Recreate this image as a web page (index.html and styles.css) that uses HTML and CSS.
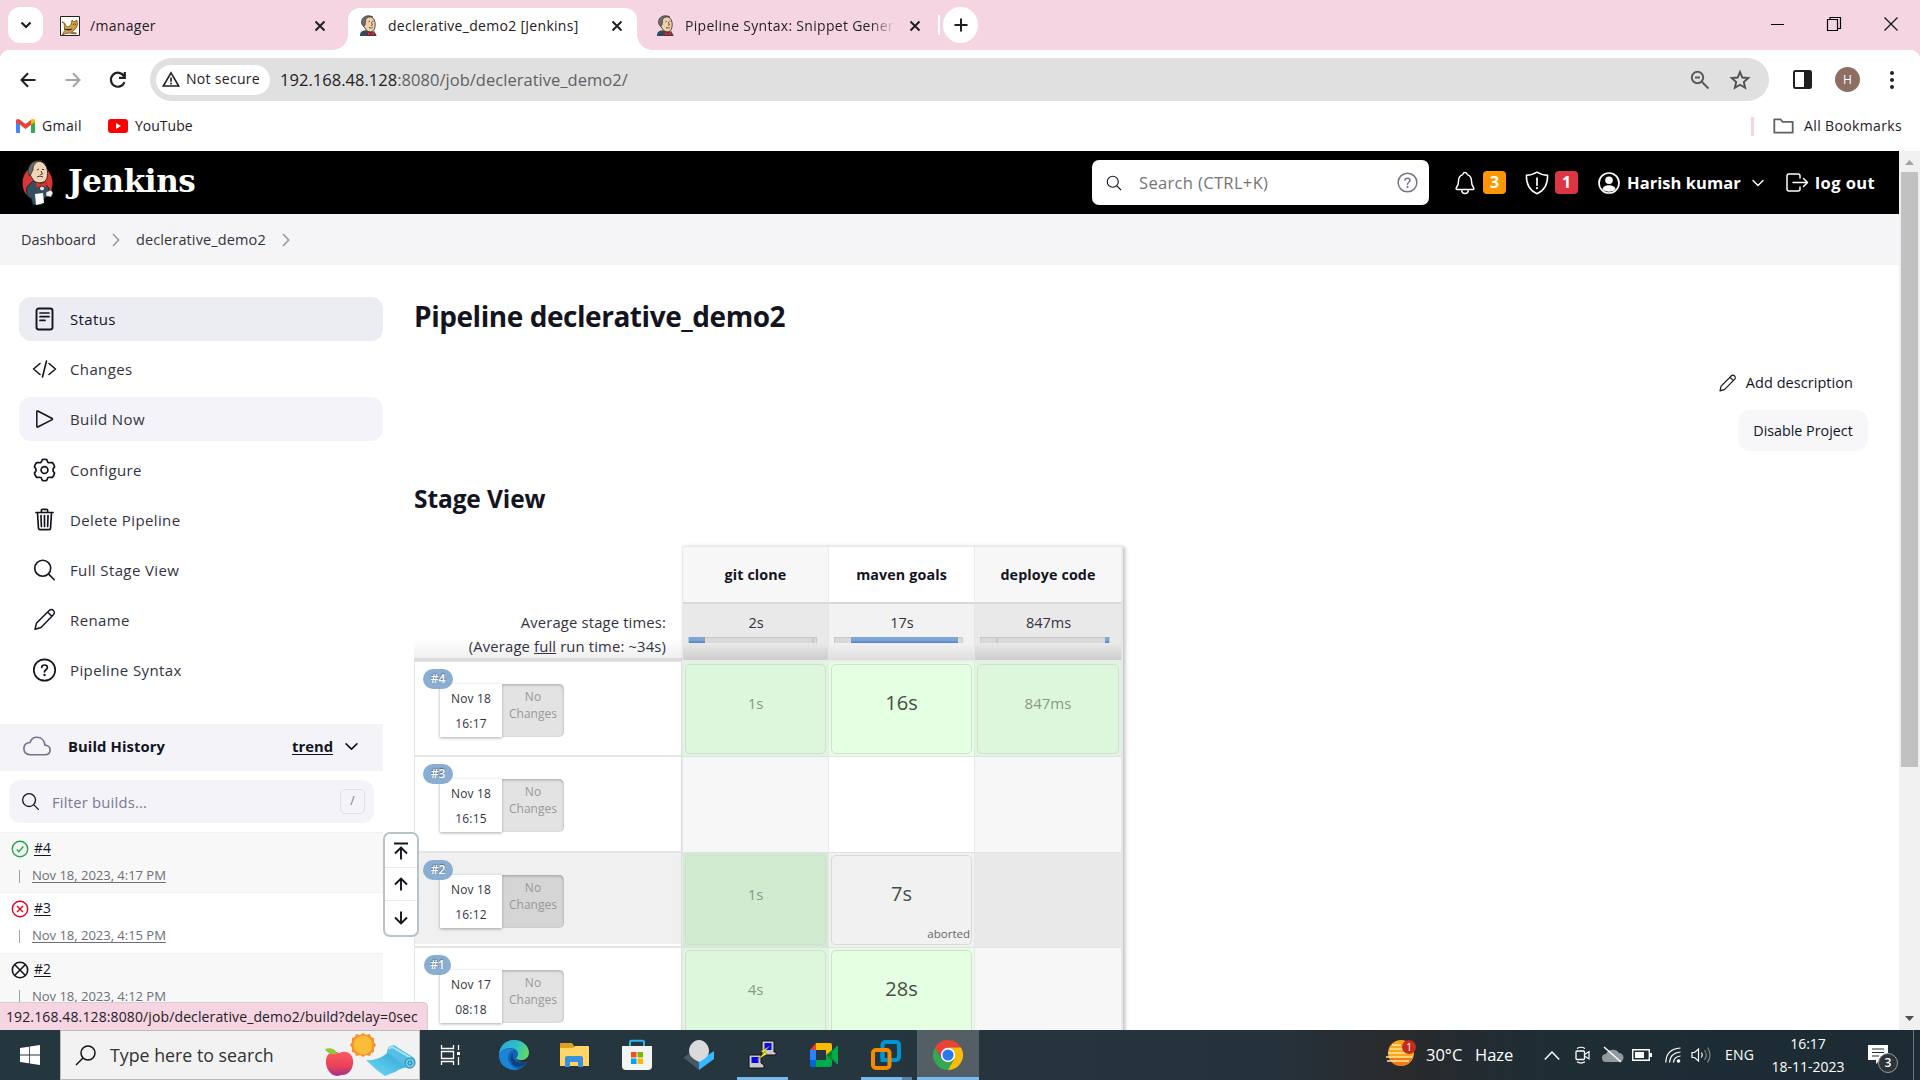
FILE: index.html
```html
<!DOCTYPE html>
<html lang="en">
<head>
<meta charset="utf-8">
<title>declerative_demo2 [Jenkins]</title>
<link rel="stylesheet" href="styles.css">
</head>
<body>
<svg class="defs" aria-hidden="true">
  <symbol id="close" viewBox="0 0 12 12"><path d="M1.500 1.500l9 9m0-9l-9 9" fill="none" stroke="#1f2023" stroke-width="2"/></symbol>
  <symbol id="butler" viewBox="0 0 20 22">
    <path d="M1 22c0-4 2-5.500 6-6l5 1c4 0 6 2 6.500 5z" fill="#2f4a5c"/>
    <path d="M5 5c1-4 9-5 11 0 1.500 3 1.500 8-.5 11-2 2.500-6 2-7.500 0L5 12z" fill="#efd0a8" stroke="#3b3634" stroke-width=".9"/>
    <path d="M5 12C1.500 10 2 4 5.500 2 8 .2 12 .3 14.500 2 11 1.500 8 2 7 5l-.5 5z" fill="#6d6b6d" stroke="#333" stroke-width=".7"/>
    <path d="M10 7l1.500-.6M13.800 6.500h1.400M13 7.500l1.200 3-1.600.4M10.500 13c1.500 1 3 .8 4-.2" fill="none" stroke="#51453b" stroke-width=".9"/>
    <path d="M9 17.500l3.500 1.500 3.700-1.800v4.300l-3.700-1.300L9 22z" fill="#d33833" stroke="#6e1512" stroke-width=".5"/>
  </symbol>
  <symbol id="search" viewBox="0 0 512 512"><path d="M221.090 64a157.090 157.090 0 10157.090 157.090A157.100 157.100 0 00221.090 64zM338.290 338.290L448 448" fill="none" stroke="currentColor" stroke-width="32" stroke-linecap="round"/></symbol>
  <symbol id="help" viewBox="0 0 24 24"><circle cx="12" cy="12" r="10.700" fill="none" stroke="currentColor" stroke-width="1.700"/><path d="M9.200 9.400c.1-3.200 5.700-3.200 5.700.1 0 2.200-2.800 2.200-2.900 4.400" fill="none" stroke="currentColor" stroke-width="1.700" stroke-linecap="round"/><circle cx="12" cy="17" r="1.200" fill="currentColor"/></symbol>
  <symbol id="chevron" viewBox="0 0 14 8"><path d="M1.200 1.200L7 6.800l5.800-5.600" fill="none" stroke="currentColor" stroke-width="1.700" stroke-linecap="round" stroke-linejoin="round"/></symbol>
  <symbol id="crumb" viewBox="0 0 8 14"><path d="M1.500 1.500L6.700 7l-5.200 5.500" fill="none" stroke="#9999ad" stroke-width="1.700" stroke-linecap="round" stroke-linejoin="round"/></symbol>
  <symbol id="pencil" viewBox="0 0 24 24"><path d="M2.200 21.800l1.400-6L16.400 3a2.900 2.900 0 014.200 4.200L8.200 20zM15 4.700l4.300 4.300" transform="translate(.3 -.5)" fill="none" stroke="currentColor" stroke-width="1.500" stroke-linejoin="round"/></symbol>
</svg>

<header class="tabs">
  <button class="tab-menu"><svg width="12" height="8" viewBox="0 0 12 8"><path d="M1.500 1.500L6 6l4.500-4.500" fill="none" stroke="#1f2023" stroke-width="2.200"/></svg></button>
  <div class="tab tab-first">
    <svg width="20" height="20" viewBox="0 0 20 20"><path d="M.5.5h19v19H.5z" fill="#fdfdf6" stroke="#222"/><path d="M2 6c4 0 3 5 6 5l3-2 1-5 2 2 3-2 .5 5-2 4-4 3 5 1-1 1-6-1-4 .5-3 1.500 1-3 2-2C3 12 6 7 2 6z" fill="#d2a041" stroke="#5c4012" stroke-width=".7"/><path d="M13 8l1 .5m2-.5l-1 .5M4 13l5 1 3-1" stroke="#222" stroke-width=".9"/></svg>
    <span class="tab-title">/manager</span>
    <svg class="x" width="12" height="12"><use href="#close"/></svg>
  </div>
  <div class="tab active">
    <svg width="19" height="21"><use href="#butler"/></svg>
    <span class="tab-title">declerative_demo2 [Jenkins]</span>
    <svg class="x" width="12" height="12"><use href="#close"/></svg>
  </div>
  <div class="tab">
    <svg width="19" height="21"><use href="#butler"/></svg>
    <span class="tab-title fade">Pipeline Syntax: Snippet Genera</span>
    <svg class="x" width="12" height="12"><use href="#close"/></svg>
  </div>
  <i class="tab-sep"></i>
  <button class="new-tab"><svg width="14" height="14" viewBox="0 0 14 14"><path d="M7 .5v13M.5 7h13" stroke="#1f2023" stroke-width="2"/></svg></button>
  <div class="window">
    <svg width="14" height="14" viewBox="0 0 14 14"><path d="M0 7.500h13" stroke="#000"/></svg>
    <svg width="14" height="14" viewBox="0 0 14 14"><path d="M.5 2.500h10v11H.5zM3 2.500v-2h10.500v11h-3" fill="none" stroke="#000" stroke-width="1.200"/></svg>
    <svg width="14" height="14" viewBox="0 0 14 14"><path d="M.5.5l13 13m0-13l-13 13" stroke="#111" stroke-width="1.200"/></svg>
  </div>
</header>

<div class="toolbar">
  <svg width="16" height="16" viewBox="0 0 16 16"><path d="M15.500 8H1.500M8 1.200L1.500 8 8 14.800" fill="none" stroke="#1f2023" stroke-width="2"/></svg>
  <svg width="16" height="16" viewBox="0 0 16 16"><path d="M.5 8h14M8 1.200L14.500 8 8 14.800" fill="none" stroke="#a5a5a6" stroke-width="2"/></svg>
  <svg width="18" height="18" viewBox="0 0 18 18"><path d="M15.500 11.200A7 7 0 1 1 15 5.200M15.800 1v5.800H10" fill="none" stroke="#1f2023" stroke-width="2.200"/></svg>
  <div class="omnibox">
    <div class="chip"><svg width="18" height="16" viewBox="0 0 18 16"><path d="M9 1.800L16.700 15H1.300zM9 6.500v4.200M9 11.800v1.600" fill="none" stroke="#1f2023" stroke-width="1.600"/></svg><span>Not secure</span></div>
    <div class="url"><b>192.168.48.128</b>:8080/job/declerative_demo2/</div>
    <svg width="20" height="20" viewBox="0 0 20 20"><circle cx="7.500" cy="7.500" r="5.700" fill="none" stroke="#5b5c5e" stroke-width="2"/><path d="M11.500 11.500l7 7M5 7.500h5" stroke="#5b5c5e" stroke-width="2"/></svg>
    <svg class="star" width="20" height="20" viewBox="0 0 20 20"><path d="M10 2l2.300 5.500 6 .5-4.500 4 1.400 5.900L10 14.800l-5.200 3.100L6.200 12 1.700 8l6-.5z" fill="none" stroke="#505154" stroke-width="1.900"/></svg>
  </div>
  <svg class="panel" width="19" height="19" viewBox="0 0 19 19"><rect x="1" y="1" width="17" height="17" rx="1.500" fill="#fff" stroke="#1f2023" stroke-width="2"/><path d="M11 1h7v17h-7z" fill="#1f2023"/></svg>
  <span class="avatar">H</span>
  <svg class="dots" width="4" height="18" viewBox="0 0 4 18"><path d="M2 2h0M2 9h0M2 16h0" stroke="#1f2023" stroke-width="4" stroke-linecap="round"/></svg>
</div>

<nav class="bookmarks">
  <svg width="19" height="14" viewBox="0 0 19 14"><path d="M0 2v11q0 1 1 1h3V5z" fill="#4285f4"/><path d="M19 2v11q0 1-1 1h-3V5z" fill="#34a853"/><path d="M0 2.200C0 0 2-.6 3.500.5l6 4.500 6-4.500v5L9.500 10 4 5.800 0 3.500z" fill="#ea4335"/><path d="M19 2.200C19 0 17-.6 15 .8v5l4-2.800z" fill="#fbbc04"/></svg>
  <span class="gmail">Gmail</span>
  <svg width="20" height="14" viewBox="0 0 20 14"><rect width="20" height="14" rx="3" fill="#f00"/><path d="M8 4l5 3-5 3z" fill="#fff"/></svg>
  <span class="yt">YouTube</span>
  <i class="bm-sep"></i>
  <svg width="21" height="16" viewBox="0 0 21 16"><path d="M1.300 1.300h6.200l2 2.500h10.200v10.900H1.300z" fill="none" stroke="#606164" stroke-width="1.800" stroke-linejoin="round"/></svg>
  <span class="all">All Bookmarks</span>
</nav>

<div class="viewport">
<div class="page">
  <header class="jenkins-head">
    <svg class="mascot" width="31" height="45" viewBox="0 0 31 45"><ellipse cx="15.500" cy="23" rx="15" ry="17.500" fill="#d33833"/><path d="M5 27l6-6 11 2 5 5-1 8-4 2-2 7h-9l-2-7C5 38 4 32 5 27z" fill="#335061" stroke="#101b22" stroke-width=".8"/><path d="M8 6c3-6 12-7 16 0 2 4 2 11 0 14-3 4-10 3-12 1L8 15z" fill="#f0d6b7" stroke="#2a2522" stroke-width=".9"/><path d="M8 16c-3-3-2-10 2-13C14 0 18 0 20 1c-6 0-9 3-9 9z" fill="#6d6b6d" stroke="#222" stroke-width=".7"/><path d="M15 10l2-1m3 .5h2M19 11l1.500 3-2 .5M15 17q3-2 6 0" fill="none" stroke="#49372c"/><path d="M14 22l5 2 5-2v6l-5-2-5 2z" fill="#d33833" stroke="#81211d" stroke-width=".5"/><circle cx="20" cy="28.500" r="2.500" fill="#e5e2e2" stroke="#333"/><path d="M13 34l8-1 1 10-8 2z" fill="#fff"/><path d="M24 32l5-2 2 3-2 4-5-1z" fill="#eee" stroke="#444" stroke-width=".6"/></svg>
    <span class="brand">Jenkins</span>
    <div class="search-box"><svg width="18" height="18" class="ink"><use href="#search"/></svg><span>Search (CTRL+K)</span><svg width="21" height="21" class="violet"><use href="#help"/></svg></div>
    <svg class="bell" width="26" height="26" viewBox="0 0 512 512"><path d="M427.680 351.430C402 320 383.870 304 383.870 217.350 383.870 138 343.350 109.730 310 96c-4.430-1.820-8.600-6-9.950-10.550C294.200 65.540 277.800 48 256 48s-38.210 17.550-44 37.470c-1.350 4.600-5.520 8.710-9.950 10.530-33.390 13.750-73.870 41.920-73.870 121.350C128.130 304 110 320 84.320 351.430 73.680 364.450 83 384 101.610 384h308.880c18.510 0 27.770-19.610 17.190-32.570zM320 384v16a64 64 0 01-128 0v-16" fill="none" stroke="#fff" stroke-width="29"/></svg>
    <span class="count orange">3</span>
    <svg class="shield" width="24" height="24" viewBox="0 0 24 24"><path d="M12 1.200c3 2 6.500 3 10.600 3.100C22.800 14 19 19.800 12 22.800 5 19.800 1.200 14 1.400 4.300 5.500 4.200 9 3.200 12 1.200z" fill="none" stroke="#fff" stroke-width="1.500" stroke-linejoin="round"/><path d="M12 7.200v7" stroke="#fff" stroke-width="1.700" stroke-linecap="round"/><circle cx="12" cy="17.200" r="1.100" fill="#fff"/></svg>
    <span class="count red">1</span>
    <svg class="user" width="22" height="22" viewBox="0 0 22 22"><circle cx="11" cy="11" r="10" fill="none" stroke="#fff" stroke-width="1.700"/><circle cx="11" cy="8.300" r="3.800" fill="#fff"/><path d="M4.500 17c1-5 12-5 13 0-3 3.500-10 3.500-13 0z" fill="#fff"/></svg>
    <span class="username">Harish kumar</span>
    <svg class="user-chev" width="12" height="8"><use href="#chevron"/></svg>
    <svg class="exit" width="23" height="19" viewBox="0 0 23 19"><path d="M14 5V3q0-2-2-2H3Q1 1 1 3v13q0 2 2 2h9q2 0 2-2v-2M7 9.500h14.500M17.500 5.500l4 4-4 4" fill="none" stroke="#fff" stroke-width="1.500" stroke-linecap="round" stroke-linejoin="round"/></svg>
    <span class="logout">log out</span>
  </header>
  <nav class="crumbs"><span class="c1">Dashboard</span><svg width="8" height="14"><use href="#crumb"/></svg><span class="c2">declerative_demo2</span><svg width="8" height="14"><use href="#crumb"/></svg></nav>

  <div class="body">
    <aside class="side">
      <ul class="tasks">
        <li class="current"><svg width="24" height="24" viewBox="0 0 24 24"><rect x="4" y="1.500" width="16" height="21" rx="2.200" fill="none" stroke="currentColor" stroke-width="1.900"/><path d="M7.500 6h9M7.500 9.700h9M7.500 13.400h5" stroke="currentColor" stroke-width="1.700" stroke-linecap="round"/></svg><span>Status</span></li>
        <li><svg width="24" height="24" viewBox="0 0 24 24"><path d="M7.500 6.500L1 12l6.500 5.500M16.500 6.500L23 12l-6.500 5.500M14 4l-4 16" fill="none" stroke="currentColor" stroke-width="1.600" stroke-linecap="round" stroke-linejoin="round"/></svg><span>Changes</span></li>
        <li class="hover"><svg width="24" height="24" viewBox="0 0 512 512"><path d="M92 96v320c0 10 10 16 20 10l308-158c9-5 9-18 0-23L112 86c-10-6-20 0-20 10z" fill="none" stroke="currentColor" stroke-width="32"/></svg><span>Build Now</span></li>
        <li><svg width="24" height="24" viewBox="0 0 24 24"><path d="M9.800 1.630Q12 .9 14.200 1.630L15.300 4.300Q16.300 4.900 17.200 4.700L19.880 4.600Q21.500 6.500 22.080 8.720L20.600 11Q20.400 12 20.600 13L22.080 15.280Q21.500 17.500 19.880 19.400L17.200 19.300Q16.300 19.100 15.300 19.700L14.200 22.370Q12 23.100 9.800 22.370L8.700 19.700Q7.700 19.100 6.800 19.300L4.120 19.400Q2.500 17.500 1.920 15.280L3.400 13Q3.600 12 3.400 11L1.920 8.720Q2.500 6.500 4.120 4.600L6.800 4.700Q7.700 4.900 8.700 4.300z" fill="none" stroke="currentColor" stroke-width="1.700" stroke-linejoin="round"/><circle cx="12" cy="12" r="3.400" fill="none" stroke="currentColor" stroke-width="1.700"/></svg><span>Configure</span></li>
        <li><svg width="25" height="25" viewBox="0 0 512 512"><path d="M112 112l20 320c.95 18.490 14.400 32 32 32h184c17.670 0 30.870-13.510 32-32l20-320M80 112h352M192 112V72h0a23.930 23.930 0 0124-24h80a23.930 23.930 0 0124 24h0v40M256 176v224M184 176l8 224M328 176l-8 224" fill="none" stroke="currentColor" stroke-width="34" stroke-linecap="round" stroke-linejoin="round"/></svg><span>Delete Pipeline</span></li>
        <li><svg width="26" height="26"><use href="#search"/></svg><span>Full Stage View</span></li>
        <li><svg width="24" height="24"><use href="#pencil"/></svg><span>Rename</span></li>
        <li><svg width="24" height="24"><use href="#help"/></svg><span>Pipeline Syntax</span></li>
      </ul>
      <div class="history-head"><svg width="28" height="28" viewBox="0 0 512 512"><path d="M400 240c-8.890-89.540-71-144-144-144-69 0-113.440 48.200-128 96-60 6-112 43.590-112 112 0 66 54 112 120 112h260c55 0 100-27.440 100-88 0-59.820-53-85.760-96-88z" fill="none" stroke="#73738c" stroke-width="30" stroke-linejoin="round"/></svg><b>Build History</b><a class="trend">trend</a><svg width="13" height="9"><use href="#chevron"/></svg></div>
      <div class="filter"><svg width="21" height="21"><use href="#search"/></svg><span>Filter builds...</span><kbd>/</kbd></div>
      <ul class="builds">
        <li><div><svg width="18" height="18" viewBox="0 0 18 18"><circle cx="9" cy="9" r="7.700" fill="none" stroke="#1ea64b" stroke-width="1.400"/><path d="M5.800 9.500l2 2.300 4.500-5.300" fill="none" stroke="#1ea64b" stroke-width="1.400"/></svg><a>#4</a></div><div class="when"><i></i><a>Nov 18, 2023, 4:17 PM</a></div></li>
        <li><div><svg width="18" height="18" viewBox="0 0 18 18"><circle cx="9" cy="9" r="7.700" fill="none" stroke="#e6001f" stroke-width="1.400"/><path d="M6 6l6 6m0-6l-6 6" stroke="#e6001f" stroke-width="1.400"/></svg><a>#3</a></div><div class="when"><i></i><a>Nov 18, 2023, 4:15 PM</a></div></li>
        <li><div><svg width="18" height="18" viewBox="0 0 18 18"><circle cx="9" cy="9" r="7.700" fill="none" stroke="#14141f" stroke-width="1.600"/><path d="M3.800 3.800l10.400 10.400m0-10.400L3.800 14.200" stroke="#14141f" stroke-width="1.600"/></svg><a>#2</a></div><div class="when"><i></i><a>Nov 18, 2023, 4:12 PM</a></div></li>
      </ul>
    </aside>

    <main class="main">
      <h1>Pipeline declerative_demo2</h1>
      <div class="actions">
        <a class="add"><svg width="19" height="19"><use href="#pencil"/></svg><span>Add description</span></a>
        <button class="disable">Disable Project</button>
      </div>
      <h2>Stage View</h2>
      <div class="stage-view">
        <div class="runs">
          <div class="averages"><span>Average stage times:</span><span>(Average <u>full</u> run time: ~34s)</span></div>
          <div class="run"><span class="num">#4</span><div class="card"><div class="date"><span>Nov 18</span><span>16:17</span></div><div class="nochg">No<br>Changes</div></div></div>
          <div class="run"><span class="num">#3</span><div class="card"><div class="date"><span>Nov 18</span><span>16:15</span></div><div class="nochg">No<br>Changes</div></div></div>
          <div class="run dim"><span class="num">#2</span><div class="card"><div class="date"><span>Nov 18</span><span>16:12</span></div><div class="nochg">No<br>Changes</div></div></div>
          <div class="run"><span class="num one">#1</span><div class="card"><div class="date"><span>Nov 17</span><span>08:18</span></div><div class="nochg">No<br>Changes</div></div></div>
        </div>
        <div class="stages">
          <div class="name odd">git clone</div><div class="name">maven goals</div><div class="name odd">deploye code</div>
          <div class="avg odd"><span>2s</span><div class="bar"><i style="width:16px"></i><s style="margin-left:107px"></s></div></div>
          <div class="avg"><span>17s</span><div class="bar"><i style="margin-left:16px;width:107px"></i></div></div>
          <div class="avg odd"><span>847ms</span><div class="bar"><s style="margin-left:15px"></s><i style="margin-left:107px;width:5px"></i></div></div>
          <div class="cell odd ok"><div>1s</div></div><div class="cell ok mid"><div>16s</div></div><div class="cell odd ok"><div>847ms</div></div>
          <div class="cell odd"></div><div class="cell"></div><div class="cell odd"></div>
          <div class="cell odd ok dark"><div>1s</div></div><div class="cell mid aborted"><div>7s<small>aborted</small></div></div><div class="cell odd void"></div>
          <div class="cell odd ok"><div>4s</div></div><div class="cell ok mid"><div>28s</div></div><div class="cell odd"></div>
        </div>
      </div>
    </main>
  </div>
</div>
<div class="scrollbar"><svg width="9" height="5" viewBox="0 0 9 5"><path d="M0 5l4.500-5L9 5z" fill="#a3a3a3"/></svg><i></i><svg width="9" height="5" viewBox="0 0 9 5"><path d="M0 0l4.500 5L9 0z" fill="#505050"/></svg></div>
<div class="jump">
  <span><svg width="14" height="18" viewBox="0 0 14 18"><path d="M0 1.500h14M7 17.500V6M1 11.500l6-6 6 6" fill="none" stroke="#14141f" stroke-width="1.900"/></svg></span>
  <span><svg width="14" height="14" viewBox="0 0 14 14"><path d="M7 13.500V1.800M1 7.500l6-6 6 6" fill="none" stroke="#14141f" stroke-width="1.900"/></svg></span>
  <span><svg width="14" height="14" viewBox="0 0 14 14"><path d="M7 .5v11.700M1 6.500l6 6 6-6" fill="none" stroke="#14141f" stroke-width="1.900"/></svg></span>
</div>
<div class="status-bubble"><span>192.168.48.128:8080/job/declerative_demo2/build?delay=0sec</span></div>
</div>

<footer class="taskbar">
  <div class="start"><svg width="20" height="20" viewBox="0 0 20 20"><path d="M0 3l9-1.300v7.900H0zM9.800 1.500L20 0v9.600H9.800zM0 10.400h9v7.900L0 17zM9.800 10.400H20V20L9.800 18.500z" fill="#fff"/></svg></div>
  <div class="win-search">
    <svg width="21" height="21" viewBox="0 0 21 21"><circle cx="13" cy="8" r="7" fill="none" stroke="#111" stroke-width="1.500"/><path d="M8 13L1 20" stroke="#111" stroke-width="1.500"/></svg>
    <span>Type here to search</span>
    <svg class="doodle" width="92" height="46" viewBox="0 0 92 46">
      <defs><linearGradient id="ap" x1="0" y1="0" x2="0" y2="1"><stop offset="0" stop-color="#ff5a5e"/><stop offset=".6" stop-color="#e8415a"/><stop offset="1" stop-color="#a52f8e"/></linearGradient><linearGradient id="mat" x1="0" y1="1" x2="1" y2="0"><stop offset="0" stop-color="#6fdcf7"/><stop offset=".6" stop-color="#3fb2dc"/><stop offset="1" stop-color="#86e0f5"/></linearGradient></defs>
      <path d="M2 28c1-8 8-10 13-7 6-3 13-1 14 7 1 9-5 16-12 15C9 47 1 38 2 28z" fill="url(#ap)"/><path d="M1 17c5-2 11 0 12 5C7 23 3 21 1 17z" fill="#8cc83c"/>
      <path d="M39 1l3 2 4-1 1 3 3 1v4l2 3-2 3v4l-3 1-1 3-4-1-3 2-3-2-4 1-1-3-3-1v-4l-2-3 2-3V6l3-1 1-3 4 1z" fill="#f7912f"/><circle cx="39" cy="13" r="9.500" fill="#f9bd38"/>
      <path d="M42 28q11 1 20-6l8-9 21 15-3 7q-10 0-17 5l-10 4q-8-5-19-16z" fill="url(#mat)"/><path d="M63 20q1-8 8-6l18 11q4 3 1 8-3 5-7 3z" fill="#58bfe4"/><path d="M65 17q2-3 5-1l17 10" fill="none" stroke="#a5e6f7" stroke-width="2"/><circle cx="86" cy="31" r="5" fill="#6cc9e8" stroke="#2a85b0"/><circle cx="86" cy="31" r="2" fill="none" stroke="#2a85b0"/>
    </svg>
  </div>
  <div class="app"><svg width="21" height="20" viewBox="0 0 21 20"><path d="M1.500 0v3.500h12V0M1.500 20v-3.500h12V20M1.500 6.500h12v7h-12zM18.500 0v5M18.500 12v8" fill="none" stroke="#fff" stroke-width="1.300"/><path d="M17 7h3v3h-3z" fill="#fff"/></svg></div>
  <div class="app edge"><svg width="30" height="30" viewBox="0 0 30 30"><defs><linearGradient id="e1" x1="0" x2="1" y1=".3" y2=".6"><stop offset="0" stop-color="#2aa5de"/><stop offset=".6" stop-color="#35c1c0"/><stop offset="1" stop-color="#64dd55"/></linearGradient></defs><circle cx="15" cy="15" r="15" fill="#0f62b5"/><path d="M0 14C1 4 8 0 15 0c9 0 15 6 15 13 0 6-7 9-12 6-2-1 1-2 1-5 0-4-4-6-8-6-5 0-9 3-11 6z" fill="url(#e1)"/><path d="M11 12c-5 6 0 17 10 17-4 2-21 1-21-14 2-6 11-8 15-5-2 0-3 1-4 2z" fill="#1b84d6"/><path d="M14 13c-2 5 3 12 14 9-3 4-8 6-12 4-5-3-6-10-2-13z" fill="#123f78"/><path d="M18 19c5 3 12 0 12-6l.5 8-2 1c-5 1-9 0-10.500-3z" fill="#25363e"/></svg></div>
  <div class="app"><svg width="29" height="24" viewBox="0 0 29 24"><path d="M0 1q0-1 1-1h11l2 3v5H0z" fill="#e0a11d"/><path d="M0 5h13l2-2h13q1 0 1 1v19H0z" fill="#ffd567"/><path d="M5 24v-9q0-2 2-2h14q2 0 2 2v9h-5v-5h-8v5z" fill="#3b92dc"/></svg></div>
  <div class="app"><svg width="30" height="30" viewBox="0 0 30 30"><path d="M8 7V2q0-1.200 1.200-1.200h11.600Q22 .8 22 2v5" fill="none" stroke="#2fb3ee" stroke-width="2"/><path d="M0 6h30v20q0 4-4 4H4q-4 0-4-4z" fill="#f4f4f4"/><path d="M9 12h5.500v5.500H9z" fill="#f25022"/><path d="M15.500 12H21v5.500h-5.500z" fill="#7fba00"/><path d="M9 18.500h5.500V24H9z" fill="#00a4ef"/><path d="M15.500 18.500H21V24h-5.500z" fill="#ffb900"/></svg></div>
  <div class="app"><svg width="30" height="30" viewBox="0 0 30 30"><path d="M0 17l6-4 9 8v9L0 18z" fill="#4a5a63"/><path d="M30 11v8l-15 11v-9l9-6z" fill="#35b8ff"/><path d="M15 0c6 0 10 6 10 11s-4 8-10 11C9 19 5 16 5 11S9 0 15 0z" fill="#d9dadb"/></svg></div>
  <div class="app run1"><svg width="30" height="29" viewBox="0 0 30 29"><path d="M14 1h12v11h2v3H14z" fill="#c9c9c9" stroke="#111"/><path d="M16.500 3h7v7h-7z" fill="#0a0ae0"/><path d="M1 15h12v8l3 2v3H1z" fill="#c9c9c9" stroke="#111"/><path d="M3.500 17h7v6h-7z" fill="#0a0ae0"/><path d="M22 6l-9 5 3 2-7 7 10-6-3-2z" fill="#ffef00" stroke="#665" stroke-width=".5"/></svg></div>
  <div class="app"><svg width="28" height="24" viewBox="0 0 28 24"><path d="M6 0v7H0z" fill="#ea4335"/><path d="M0 7h6v10H0z" fill="#2684fc"/><path d="M0 17h6v7H2q-2 0-2-2z" fill="#0066da"/><path d="M6 0h14q2 0 2 2v8l-6 3V7H6z" fill="#ffba00"/><path d="M6 17h10v-4l6-3v12q0 2-2 2H6z" fill="#00ac47"/><path d="M22 8l5-5q1-.5 1 .5v17q0 1-1 .5l-5-5z" fill="#00ac47"/><path d="M16 12l6-5v10z" fill="#00832d"/></svg></div>
  <div class="app run2"><svg width="30" height="30" viewBox="0 0 30 30"><rect x="11.500" y="2" width="16.500" height="18" rx="3" fill="none" stroke="#0095d3" stroke-width="4"/><rect x="2" y="10" width="16.500" height="18" rx="3" fill="none" stroke="#f38b00" stroke-width="4"/><path d="M11.500 13v7h5" fill="none" stroke="#0095d3" stroke-width="4"/></svg></div>
  <div class="app open"><svg width="30" height="30" viewBox="0 0 30 30"><path d="M2 7.500A15 15 0 0 1 28 7.500H15L9 18z" fill="#ea4335"/><path d="M2 7.500A15 15 0 0 0 15 30l6.500-11.200H8.500z" fill="#34a853"/><path d="M28 7.500A15 15 0 0 1 15 30l6.500-11.200L15 7.500z" fill="#fbbc05"/><circle cx="15" cy="15" r="7.200" fill="#fff"/><circle cx="15" cy="15" r="5.600" fill="#2b78f0"/></svg></div>
  <div class="tray">
    <div class="weather"><svg width="30" height="26" viewBox="0 0 30 26"><circle cx="15" cy="13" r="13" fill="#f9a61c"/><path d="M3 18h24q-4 8-12 8T3 18z" fill="#f07a17"/><path d="M6 5h9M4 9h16M2 13h20M0 17h26M1 21h22" stroke="#ffe3a0" stroke-width="1.500"/></svg><em>1</em></div>
    <span class="temp">30°C</span><span class="haze">Haze</span>
    <svg class="up" width="16" height="9" viewBox="0 0 16 9"><path d="M.8 8.500L8 1l7.200 7.500" fill="none" stroke="#fff" stroke-width="1.500"/></svg>
    <svg class="meetnow" width="15" height="18" viewBox="0 0 15 18"><rect x="1" y="5" width="8.500" height="8.500" rx="1" fill="none" stroke="#fff" stroke-width="1.300"/><path d="M9.500 8.500L14 5.500v7.500l-4.500-3M2 2.500Q6 0 10 2.500M2 15.800q4 2.500 8 0" fill="none" stroke="#fff" stroke-width="1.200"/></svg>
    <svg class="cloud" width="21" height="16" viewBox="0 0 21 16"><path d="M4 15a4 4 0 0 1 0-8 7 6 0 0 1 13-1 4.500 4.500 0 0 1 0 9z" fill="#929a9e"/><path d="M2 0l17 15" stroke="#fff" stroke-width="1.500"/></svg>
    <svg class="battery" width="20" height="12" viewBox="0 0 20 12"><path d="M.7.700h16.600v10.600H.7z" fill="none" stroke="#fff" stroke-width="1.400"/><path d="M3 3h9v6H3zM18 4h2v4h-2z" fill="#fff"/></svg>
    <svg class="wifi" width="16" height="16" viewBox="0 0 16 16"><path d="M.8 15.500Q1 2 15.500 1M4.500 15.500Q5 6 15.500 5M8.500 15.500Q9 9.500 15.500 9" fill="none" stroke="#fff" stroke-width="1.200"/><circle cx="13.500" cy="14" r="1.800" fill="#fff"/></svg>
    <svg class="sound" width="21" height="18" viewBox="0 0 21 18"><path d="M1 6.500h2.500L7.500 3v12l-4-3.500H1z" fill="none" stroke="#fff" stroke-width="1.200"/><path d="M10.500 6.500q1.500 2.500 0 5" stroke="#fff" fill="none" stroke-width="1.200"/><path d="M13.500 4q3.500 5 0 10M16.500 1.500q5 7.500 0 15" stroke="#7b868b" fill="none" stroke-width="1.200"/></svg>
    <span class="lang">ENG</span>
    <div class="clock"><span class="time">16:17</span><span class="day">18-11-2023</span></div>
    <div class="notes"><svg width="20" height="20" viewBox="0 0 20 20"><path d="M0 0h20v15h-8l-4 4v-4H0z" fill="#fff"/><path d="M4 4h12M4 7.500h12M4 11h7" stroke="#1f2c33" stroke-width="1.200"/></svg><em>3</em></div>
    <i class="peek"></i>
  </div>
</footer>
</body>
</html>
```
FILE: styles.css
```css
* { box-sizing: border-box; }
body { margin: 0; width: 1920px; height: 1080px; overflow: hidden; background: #fff; color: #14141f; font: 14px/20px "Open Sans", "Noto Sans", sans-serif; white-space: nowrap; }
ul { list-style: none; margin: 0; padding: 0; }
button { border: 0; padding: 0; font: inherit; color: inherit; display: flex; align-items: center; justify-content: center; }
svg { display: block; flex: none; overflow: visible; }
.defs { position: absolute; width: 0; height: 0; }
.ink { color: #14141f; }
.violet { color: #73738c; }

/* Tab strip */
.tabs { height: 50px; background: #f6d5e3; display: flex; align-items: flex-start; padding-left: 8px; }
.tab-menu { width: 35px; height: 36px; margin-top: 7px; border-radius: 12px; background: #fff; }
.tab { height: 42px; margin-top: 8px; width: 289px; display: flex; align-items: center; padding: 0 14px 7px 11px; color: #1f2023; }
.tab-first { width: 305px; padding: 0 22px 7px 17px; }
.tab-title { margin-left: 10px; flex: 1; letter-spacing: .3px; overflow: hidden; }
.tab:nth-child(4) { width: 302px; padding-left: 19px; padding-right: 18px; }
.fade { margin-right: 14px; -webkit-mask-image: linear-gradient(90deg, #000 88%, transparent 100%); mask-image: linear-gradient(90deg, #000 88%, transparent 100%); }
.active { position: relative; background: #fff; border-radius: 12px 12px 0 0; }
.active::before, .active::after { content: ""; position: absolute; bottom: 0; width: 15px; height: 15px; }
.active::before { left: -15px; background: radial-gradient(circle at 0 0, transparent 14.500px, #fff 15px); }
.active::after { right: -15px; background: radial-gradient(circle at 100% 0, transparent 14.500px, #fff 15px); }
.tab-sep { width: 2px; height: 20px; margin: 15px 3px 0 -1px; background: #fff; }
.new-tab { width: 35px; height: 36px; margin-top: 7px; border-radius: 50%; background: #fff; }
.window { margin-left: auto; display: flex; gap: 43px; padding: 17px 22px 0 0; }
.window svg:first-child { margin-right: -1px; }

/* Toolbar */
.toolbar { height: 51px; display: flex; align-items: center; padding: 8px 26px 0 20px; position: relative; background: radial-gradient(circle at 10px 10px, #fff 10px, #f6d5e3 10.500px) 0 0/10px 10px no-repeat, radial-gradient(circle at 0 10px, #fff 10px, #f6d5e3 10.500px) 100% 0/10px 10px no-repeat, #fff; }
.toolbar > svg:nth-child(2) { margin-left: 29px; }
.toolbar > svg:nth-child(3) { margin-left: 28px; }
.omnibox { width: 1620px; height: 43px; margin: 0 0 0 23px; border-radius: 22px; background: #e0e0e0; display: flex; align-items: center; padding: 0 19px 0 6px; }
.chip { width: 114px; height: 30px; border-radius: 15px; background: #fff; display: flex; align-items: center; padding: 0 0 1px 6px; gap: 6px; color: #1f2023; }
.chip span { letter-spacing: .3px; }
.url { margin-left: 10px; flex: 1; font-size: 16.500px; letter-spacing: .03px; color: #5f6063; }
.url b { font-weight: 400; color: #1f2023; }
.star { margin-left: 20px; }
.panel { margin-left: 24px; }
.avatar { width: 25px; height: 25px; margin-left: 23px; border-radius: 50%; background: #8d6e63; color: #fff; font-size: 12px; line-height: 25px; text-align: center; }
.dots { margin-left: 30px; }

/* Bookmarks */
.bookmarks { height: 50px; display: flex; align-items: center; padding: 0 18px 0 16px; color: #1f2023; }
.gmail { margin: 0 26px 0 7px; width: 40px; letter-spacing: .4px; }
.yt { margin-left: 7px; }
.bm-sep { width: 3px; height: 19px; margin: 0 19px 0 auto; background: #f6d5e3; }
.all { margin-left: 10px; width: 98px; letter-spacing: .37px; }

/* Page */
.viewport { height: 879px; display: flex; position: relative; overflow: hidden; }
.page { width: 1899px; }
.jenkins-head { height: 63px; background: #000; color: #fff; display: flex; align-items: center; padding-left: 22px; }
.brand { margin: -4px 0 0 15px; width: 130px; font: bold 31px/40px "DejaVu Serif", serif; letter-spacing: -.4px; }
.search-box { width: 337px; height: 45px; margin-left: 894px; border-radius: 7px; background: #fff; color: #757575; display: flex; align-items: center; padding: 0 11px 0 13px; font-size: 16.600px; }
.search-box span { flex: 1; margin-left: 16px; letter-spacing: .3px; }
.bell { margin-left: 23px; }
.count { width: 23px; height: 23px; border-radius: 4px; font-weight: 700; font-size: 16px; line-height: 23px; text-align: center; }
.orange { background: #ff9800; margin-left: 5px; }
.red { background: #dc3545; margin-left: 6px; }
.shield { margin-left: 19px; }
.user { margin-left: 20px; }
.username { margin-left: 7px; width: 115px; font-weight: 700; font-size: 16.500px; letter-spacing: .05px; }
.user-chev { margin-left: 10px; }
.exit { margin-left: 22px; }
.logout { margin-left: 6px; font-weight: 700; font-size: 16.500px; letter-spacing: .45px; }
.crumbs { height: 51px; background: #f5f5f8; display: flex; align-items: center; padding-left: 21px; color: #333340; font-size: 14.500px; }
.c1 { width: 75px; margin-right: 16px; }
.c2 { width: 130px; margin: 0 16px 0 16px; letter-spacing: .12px; }
.body { display: flex; height: 765px; }

/* Sidebar */
.side { width: 383px; padding-top: 32px; }
.tasks { padding: 0 0 0 19px; height: 427px; }
.tasks li { height: 44px; margin-bottom: 6.200px; border-radius: 12px; display: flex; align-items: center; font-size: 15px; letter-spacing: .38px; color: #333340; }
.tasks svg { width: 51px; color: #14141f; }
.tasks .current { background: #ecedf3; color: #14141f; }
.tasks .hover { background: #f4f3f9; }
.history-head { height: 47px; background: #f3f3f8; display: flex; align-items: center; padding: 0 25px 3px 23px; font-size: 14.800px; }
.history-head b { margin-left: 17px; flex: 1; letter-spacing: .1px; }
.trend { font-weight: 700; text-decoration: underline; margin-right: 12px; text-underline-offset: 2px; }
.filter { margin: 9px 9px 9px; height: 43px; border-radius: 12px; background: #f3f3f8; display: flex; align-items: center; padding: 0 9px 0 11px; color: #7a7a93; font-size: 14.800px; letter-spacing: .2px; }
.filter svg { color: #14141f; }
.filter span { margin-left: 11px; flex: 1; }
.filter kbd { width: 25px; height: 25px; border: 1px solid #e0e0e8; border-radius: 5px; font: 12px/22px "Open Sans", sans-serif; text-align: center; }
.builds li { height: 60.300px; border-top: 1px solid #f1f1f3; padding: 6px 0 0 11px; }
.builds li:nth-child(odd) { background: #f8f8f8; }
.builds li > div { display: flex; align-items: center; height: 20px; font-size: 13.800px; }
.builds a { text-decoration: underline; text-underline-offset: 2px; margin: -2px 0 0 5px; }
.builds .when { margin-top: 7px; font-size: 13.100px; letter-spacing: -.06px; color: #6e6e77; }
.when i { width: 1px; height: 13px; margin-left: 8px; background: #9aa5ab; }
.when a { margin-left: 12px; }

/* Main column */
.main { flex: 1; padding: 30px 31px 0 31px; }
h1 { margin: 0; font-size: 28px; line-height: 42px; font-weight: 700; letter-spacing: -.45px; }
h2 { margin: 0; font-size: 24.500px; line-height: 40px; font-weight: 700; letter-spacing: -.1px; }
.actions { height: 110px; margin-top: 32px; display: flex; flex-direction: column; align-items: flex-end; }
.add { display: flex; align-items: center; gap: 9px; height: 28px; margin: 0 15px 13px 0; font-size: 14.500px; letter-spacing: .05px; }
.disable { width: 130px; height: 41px; border-radius: 12px; background: #f7f7fa; font-size: 14.300px; }
.stage-view { display: flex; margin-top: 27px; }
.runs { width: 268px; }
.averages { height: 115px; padding: 64px 16px 0 0; display: flex; flex-direction: column; text-align: right; line-height: 24px; font-size: 14.800px; letter-spacing: .15px; color: #333340; border-bottom: 3px solid #dcdcdc; background: linear-gradient(#fff 82%, #f0f0f0); }
.run { height: 95.300px; border: 1px solid #e6e6e6; border-left-width: 1px; border-bottom-width: 1px; padding: 7px 0 0 8px; box-shadow: inset 0 -2px #fff; }
.run.dim { background: #f0f0f0; }
.num { position: relative; z-index: 1; display: block; width: 30px; height: 20px; border-radius: 10px; background: #8aadd2; color: #fff; font-size: 12px; line-height: 19px; text-align: center; font-weight: 600; text-shadow: 0 -1px 1px #567; }
.one { width: 27px; margin-left: 1px; }
.card { display: flex; width: 124px; height: 53px; margin: -5px 0 0 17px; }
.date { width: 62px; background: #fff; box-shadow: 0 1px 3px #0005; display: flex; flex-direction: column; align-items: center; font-size: 12px; letter-spacing: .15px; line-height: 25px; padding-top: 2px; color: #333340; }
.nochg { width: 62px; background: #e3e3e3; border-radius: 0 5px 5px 0; box-shadow: inset 0 1px 3px #0004; text-align: center; color: #999; font-size: 12px; line-height: 17px; padding-top: 4px; white-space: normal; }
.dim .nochg { background: #d5d5d5; }
.stages { width: 441px; display: grid; grid-template-columns: 146px 146px 147px; grid-template-rows: 57px 58px repeat(4, 95.300px); border: 1px solid #e8e8ea; box-shadow: 2px 1px 4px #0004; }
.name { border-right: 1px solid #ececec; border-bottom: 2px solid #d8d8d8; display: flex; align-items: center; justify-content: center; font-weight: 700; font-size: 14.300px; letter-spacing: .12px; background: #fff; }
.name.odd { background: #f7f7f7; }
.avg { padding: 7px 11px 0 5px; border-right: 1px solid #e5e5e5; border-bottom: 2px solid #ececec; background: linear-gradient(#f2f2f2 70%, #ddd); text-align: center; font-size: 14.500px; line-height: 24px; color: #333340; }
.avg.odd { background: linear-gradient(#e9e9e9 70%, #ccc); }
.avg span { display: block; margin-right: -7px; }
.bar { display: flex; height: 6px; margin-top: 2px; background: #d9d9d9; border: solid #c8c8c8; border-width: 1px 1px 0; }
.bar i { height: 6px; margin-top: -1px; background: linear-gradient(#7ea6d4 55%, #4d7cd0); }
.bar s { width: 2px; height: 5px; background: #c8c8c8; }
.cell { border-right: 1px solid #e8e8ea; border-bottom: 1px solid #e2e2e4; padding: 2px 2px 2px 2px; background: #fff; }
.cell.odd { background: #f7f7f7; }
.cell > div { height: 100%; border: 1px solid #d6dbd6; border-radius: 5px; display: flex; align-items: center; justify-content: center; padding-bottom: 12px; font-size: 15px; color: #869a86; position: relative; }
.cell.ok.odd { background: #ddf7dc; }
.cell.ok { background: #e4ffe2; }
.cell.mid > div { font-size: 20px; color: #444c44; }
.cell.ok.dark { background: #d1ebd1; }
.cell.aborted { background: #f1f1f1; }
.cell.void { background: #e9e9e9; }
.cell small { position: absolute; right: 1px; bottom: 0; font-size: 11.500px; color: #666; }

/* Over the page */
.scrollbar { width: 21px; background: #f0f0f0; display: flex; flex-direction: column; align-items: center; padding-top: 9px; }
.scrollbar i { width: 17px; height: 595px; margin: 7px 0 auto; background: #c1c1c1; }
.scrollbar svg:last-child { margin-bottom: 9px; }
.jump { position: absolute; left: 383px; top: 681px; width: 36px; height: 105px; border: 2px solid #b7c3c8; border-radius: 7px; background: #fff; display: grid; grid-template-rows: 34px 33px 34px; }
.jump span { display: flex; align-items: center; justify-content: center; border-bottom: 1px solid #ebebeb; }
.jump span:last-child { border: 0; }
.status-bubble { position: absolute; left: 0; bottom: 0; width: 428px; height: 28px; background: #f6d5e3; border: 1px solid #dcc9d1; border-width: 1px 1px 0 0; border-radius: 0 5px 0 0; padding-left: 6px; line-height: 27px; color: #1f2023; font-size: 14px; letter-spacing: .12px; }

/* Taskbar */
.taskbar { height: 50px; background: linear-gradient(90deg, #24363e, #26363e 45%, #25323c 66%, #292a2c 73%, #1f2d35 80%, #1c2b34); display: flex; align-items: stretch; color: #fff; }
.start { width: 60px; display: flex; align-items: center; justify-content: center; }
.win-search { width: 360px; background: #f2f2f2; border: 1px solid #bbb; display: flex; align-items: center; padding: 0 3px 0 14px; color: #333; font-size: 17.800px; }
.win-search span { margin-left: 14px; flex: 1; }
.app { width: 62px; margin-left: .3px; display: flex; align-items: center; justify-content: center; padding-bottom: 1px; }
.win-search + .app { margin-left: -1px; }
.edge { padding-left: 3px; }
.run1 { padding-left: 3px; background: linear-gradient(#76b9ed, #76b9ed) 7px 100%/51px 3px no-repeat; }
.run2 { background: linear-gradient(#76b9ed, #76b9ed) 6px 100%/41px 3px no-repeat, linear-gradient(#5585ad, #5585ad) 47px 100%/10px 3px no-repeat; }
.open { background: #535f65; border-bottom: 3px solid #76b9ed; padding-top: 2px; padding-bottom: 0; }
.tray { margin-left: auto; width: 534px; display: flex; align-items: center; }
.weather, .notes { position: relative; }
.weather { margin-top: -5px; }
.weather em { position: absolute; right: 0; top: 0; width: 14px; height: 14px; border-radius: 50%; background: #c42b1c; font: 10px/14px "Open Sans", sans-serif; text-align: center; }
.temp { margin-left: 10px; width: 37px; font-size: 16.500px; }
.haze { margin-left: 12px; width: 40px; font-size: 16.500px; }
.up { margin-left: 29px; }
.meetnow { margin-left: 15px; }
.cloud { margin-left: 12px; }
.battery { margin-left: 9px; }
.wifi { margin-left: 13px; }
.sound { margin-left: 10px; }
.lang { margin-left: 13px; width: 29px; font-size: 14px; letter-spacing: .2px; }
.clock { width: 90px; margin-left: 9px; display: flex; flex-direction: column; text-align: center; line-height: 23px; font-size: 14px; }
.notes { margin-left: 15px; }
.notes em { position: absolute; left: 10px; top: 8px; width: 20px; height: 20px; border: 1px solid #999; border-radius: 50%; background: #2b353b; font: 600 12px/18px "Open Sans", sans-serif; text-align: center; }
.peek { width: 1px; height: 50px; margin-left: 25px; background: #69747a; }
```
